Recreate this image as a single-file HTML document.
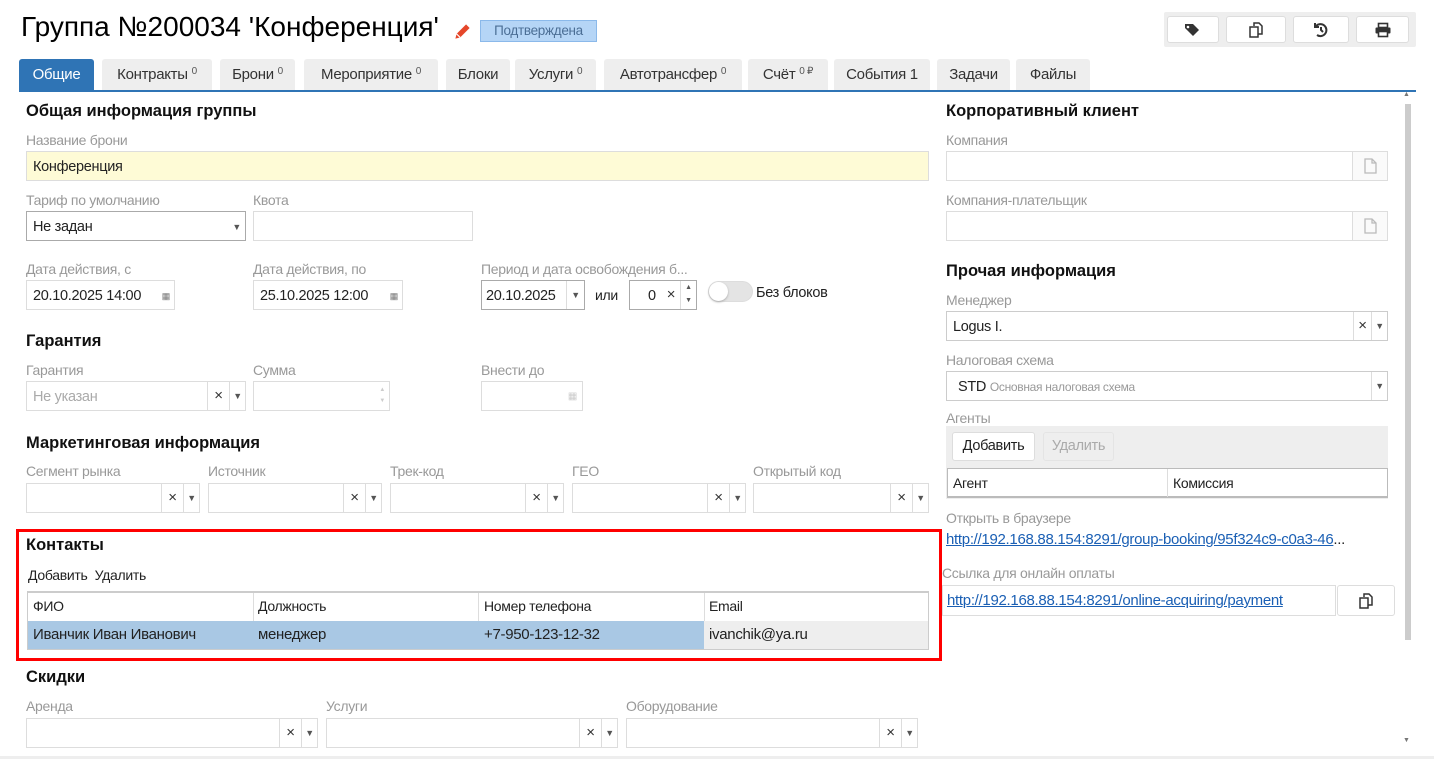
<!DOCTYPE html>
<html><head><meta charset="utf-8">
<style>
*{box-sizing:border-box;margin:0;padding:0}
body{width:1434px;height:759px;position:relative;overflow:hidden;background:#fff;font-family:"Liberation Sans",sans-serif;font-size:14px;color:#222;letter-spacing:-0.3px}
.a{position:absolute;white-space:nowrap}
.h{position:absolute;font-weight:bold;font-size:16.5px;color:#111;white-space:nowrap;letter-spacing:0}
.l{position:absolute;color:#999;font-size:14px;white-space:nowrap}
.i{position:absolute;border:1px solid #ddd;background:#fff;height:30px;line-height:30px;padding-left:6px;font-size:14.5px;white-space:nowrap;overflow:hidden}
.s{border-color:#aaa}
.x{position:absolute;top:0;height:28px;width:22px;text-align:center;font-size:15px;color:#333;border-left:1px solid #ddd;line-height:28px}
.c{position:absolute;top:0;height:28px;width:16px;text-align:center;font-size:9px;color:#555;border-left:1px solid #ddd;line-height:28px;right:0}
.tab{position:absolute;top:59px;height:31px;background:#eee;border-radius:3px 3px 0 0;line-height:31px;text-align:center;font-size:15px;color:#333}
.tab span{font-size:10px;position:relative;top:-5px;color:#555}
.tb{position:absolute;top:16px;height:27px;background:#fff;border:1px solid #ddd;border-radius:3px}
.tb svg{position:absolute;left:50%;top:50%;transform:translate(-50%,-50%)}
a{color:#1a5fb4;text-decoration:underline}
</style></head><body>
<div class="a" style="left:21px;top:11px;font-size:28px;color:#000;letter-spacing:0">Группа №200034 'Конференция'</div>
<svg class="a" style="left:453px;top:22px" width="19" height="19" viewBox="0 0 16 16"><path d="M2 14l1-4 8-8 3 3-8 8z" fill="#e5472a"/><path d="M3 10l3 3" stroke="#fff" stroke-width="1"/></svg>
<div class="a" style="left:480px;top:20px;width:117px;height:22px;background:#b5d5f6;border:1px solid #8bb9ea;color:#4b6e95;font-size:13.5px;line-height:20px;text-align:center">Подтверждена</div>

<div class="a" style="left:1164px;top:12px;width:252px;height:35px;background:#eee;border-radius:2px"></div>
<div class="tb" style="left:1167px;width:52px"><svg width="18" height="14" viewBox="0 0 18 14"><path d="M1 1h8l6 6-6 6-8-8z" fill="#333"/><circle cx="4" cy="4" r="1.3" fill="#fff"/></svg></div>
<div class="tb" style="left:1226px;width:60px"><svg width="16" height="16" viewBox="0 0 16 16" fill="none" stroke="#333" stroke-width="1.5"><path d="M6 4V1h5l3 3v8h-4"/><rect x="2" y="5" width="8" height="10"/></svg></div>
<div class="tb" style="left:1293px;width:56px"><svg width="16" height="16" viewBox="0 0 16 16" fill="none" stroke="#333" stroke-width="2"><path d="M3 4a6 6 0 1 1 1 9"/><path d="M2 1v4h4"/><path d="M8 5v3l2 2"/></svg></div>
<div class="tb" style="left:1356px;width:53px"><svg width="17" height="15" viewBox="0 0 17 15"><rect x="4" y="1" width="9" height="4" fill="none" stroke="#333" stroke-width="1.6"/><rect x="1" y="5" width="15" height="6" rx="1" fill="#333"/><rect x="4" y="9" width="9" height="5" fill="#fff" stroke="#333" stroke-width="1.6"/></svg></div>

<div class="tab" style="left:19px;width:75px;background:#2f74b5;color:#fff">Общие</div>
<div class="tab" style="left:102px;width:110px">Контракты <span>0</span></div>
<div class="tab" style="left:220px;width:75px">Брони <span>0</span></div>
<div class="tab" style="left:304px;width:134px">Мероприятие <span>0</span></div>
<div class="tab" style="left:446px;width:64px">Блоки</div>
<div class="tab" style="left:515px;width:81px">Услуги <span>0</span></div>
<div class="tab" style="left:604px;width:138px">Автотрансфер <span>0</span></div>
<div class="tab" style="left:748px;width:80px">Счёт <span>0 ₽</span></div>
<div class="tab" style="left:834px;width:96px">События 1</div>
<div class="tab" style="left:937px;width:73px">Задачи</div>
<div class="tab" style="left:1016px;width:74px">Файлы</div>
<div class="a" style="left:19px;top:90px;width:1397px;height:2px;background:#2f74b5"></div>

<div class="a" style="left:1405px;top:104px;width:6px;height:536px;background:#ccc"></div>
<div class="a" style="left:1403px;top:91px;font-size:7px;color:#777">▲</div>
<div class="a" style="left:1403px;top:737px;font-size:7px;color:#777">▼</div>
<div class="a" style="left:0;top:756px;width:1434px;height:3px;background:#eee"></div>

<div class="h" style="left:26px;top:102px">Общая информация группы</div>
<div class="l" style="left:26px;top:132px">Название брони</div>
<div class="i" style="left:26px;top:151px;width:903px;background:#fefbd6">Конференция</div>
<div class="l" style="left:26px;top:192px">Тариф по умолчанию</div>
<div class="i s" style="left:26px;top:211px;width:220px">Не задан<span class="a" style="right:4px;top:0;font-size:9px;color:#555">▼</span></div>
<div class="l" style="left:253px;top:192px">Квота</div>
<div class="i" style="left:253px;top:211px;width:220px"></div>

<div class="l" style="left:26px;top:261px">Дата действия, с</div>
<div class="i" style="left:26px;top:280px;width:149px">20.10.2025 14:00<span class="a" style="right:4px;font-size:9px;color:#777">▦</span></div>
<div class="l" style="left:253px;top:261px">Дата действия, по</div>
<div class="i" style="left:253px;top:280px;width:150px">25.10.2025 12:00<span class="a" style="right:4px;font-size:9px;color:#777">▦</span></div>
<div class="l" style="left:481px;top:261px">Период и дата освобождения б...</div>
<div class="i s" style="left:481px;top:280px;width:104px;padding-left:4px">20.10.2025<span class="c" style="width:18px">▼</span></div>
<div class="a" style="left:595px;top:287px">или</div>
<div class="i" style="left:629px;top:280px;width:68px;border-color:#aaa"><span class="a" style="left:18px">0</span><span class="x" style="left:30px;border:none">×</span><span class="c" style="font-size:7px;line-height:13px;height:28px">▲<br>▼</span></div>
<div class="a" style="left:708px;top:281px;width:45px;height:21px;border-radius:11px;background:#e4e4e4;border:1px solid #ddd"><div style="width:19px;height:19px;border-radius:50%;background:#fff;box-shadow:0 1px 2px #aaa"></div></div>
<div class="a" style="left:756px;top:285px;font-size:14.5px">Без блоков</div>

<div class="h" style="left:26px;top:332px">Гарантия</div>
<div class="l" style="left:26px;top:362px">Гарантия</div>
<div class="i" style="left:26px;top:381px;width:220px;color:#aaa">Не указан<span class="x" style="right:16px">×</span><span class="c">▼</span></div>
<div class="l" style="left:253px;top:362px">Сумма</div>
<div class="i" style="left:253px;top:381px;width:137px"><span class="a" style="right:4px;font-size:6px;color:#ccc;line-height:11px;top:3px">▲<br>▼</span></div>
<div class="l" style="left:481px;top:362px">Внести до</div>
<div class="i" style="left:481px;top:381px;width:102px"><span class="a" style="right:5px;font-size:10px;color:#ccc">▦</span></div>

<div class="h" style="left:26px;top:434px">Маркетинговая информация</div>
<div class="l" style="left:26px;top:463px">Сегмент рынка</div>
<div class="l" style="left:208px;top:463px">Источник</div>
<div class="l" style="left:390px;top:463px">Трек-код</div>
<div class="l" style="left:572px;top:463px">ГЕО</div>
<div class="l" style="left:753px;top:463px">Открытый код</div>
<div class="i" style="left:26px;top:483px;width:174px"><span class="x" style="right:16px">×</span><span class="c">▼</span></div>
<div class="i" style="left:208px;top:483px;width:174px"><span class="x" style="right:16px">×</span><span class="c">▼</span></div>
<div class="i" style="left:390px;top:483px;width:174px"><span class="x" style="right:16px">×</span><span class="c">▼</span></div>
<div class="i" style="left:572px;top:483px;width:174px"><span class="x" style="right:16px">×</span><span class="c">▼</span></div>
<div class="i" style="left:753px;top:483px;width:176px"><span class="x" style="right:16px">×</span><span class="c">▼</span></div>

<div class="a" style="left:16px;top:529px;width:926px;height:132px;border:3px solid #f00"></div>
<div class="h" style="left:26px;top:536px">Контакты</div>
<div class="a" style="left:28px;top:567px">Добавить&nbsp; Удалить</div>
<div class="a" style="left:27px;top:591px;width:902px;height:59px;border:1px solid #ccc;border-width:2px 1px 2px 1px;background:#fff"></div>
<div class="a" style="left:28px;top:621px;width:676px;height:28px;background:#a9c8e4"></div>
<div class="a" style="left:704px;top:621px;width:224px;height:28px;background:#eee"></div>
<div class="a" style="left:253px;top:593px;width:1px;height:28px;background:#ddd"></div>
<div class="a" style="left:478px;top:593px;width:1px;height:28px;background:#ddd"></div>
<div class="a" style="left:704px;top:593px;width:1px;height:28px;background:#ddd"></div>
<div class="a" style="left:33px;top:598px">ФИО</div>
<div class="a" style="left:258px;top:598px">Должность</div>
<div class="a" style="left:484px;top:598px">Номер телефона</div>
<div class="a" style="left:709px;top:598px">Email</div>
<div class="a" style="left:33px;top:626px;font-size:15px">Иванчик Иван Иванович</div>
<div class="a" style="left:258px;top:626px;font-size:15px">менеджер</div>
<div class="a" style="left:484px;top:626px;font-size:15px">+7-950-123-12-32</div>
<div class="a" style="left:709px;top:626px;font-size:15px">ivanchik@ya.ru</div>

<div class="h" style="left:26px;top:668px">Скидки</div>
<div class="l" style="left:26px;top:698px">Аренда</div>
<div class="l" style="left:326px;top:698px">Услуги</div>
<div class="l" style="left:626px;top:698px">Оборудование</div>
<div class="i" style="left:26px;top:718px;width:292px"><span class="x" style="right:16px">×</span><span class="c">▼</span></div>
<div class="i" style="left:326px;top:718px;width:292px"><span class="x" style="right:16px">×</span><span class="c">▼</span></div>
<div class="i" style="left:626px;top:718px;width:292px"><span class="x" style="right:16px">×</span><span class="c">▼</span></div>

<div class="h" style="left:946px;top:102px">Корпоративный клиент</div>
<div class="l" style="left:946px;top:132px">Компания</div>
<div class="i" style="left:946px;top:151px;width:442px"><span class="a" style="right:0;top:0;width:35px;height:28px;border-left:1px solid #ddd;background:#fafafa"><svg style="position:absolute;left:11px;top:6px" width="13" height="16" viewBox="0 0 13 16" fill="none" stroke="#bbb" stroke-width="1.3"><path d="M1 1h7l4 4v10H1z M8 1v4h4"/></svg></span></div>
<div class="l" style="left:946px;top:192px">Компания-плательщик</div>
<div class="i" style="left:946px;top:211px;width:442px"><span class="a" style="right:0;top:0;width:35px;height:28px;border-left:1px solid #ddd;background:#fafafa"><svg style="position:absolute;left:11px;top:6px" width="13" height="16" viewBox="0 0 13 16" fill="none" stroke="#bbb" stroke-width="1.3"><path d="M1 1h7l4 4v10H1z M8 1v4h4"/></svg></span></div>
<div class="h" style="left:946px;top:262px">Прочая информация</div>
<div class="l" style="left:946px;top:292px">Менеджер</div>
<div class="i" style="left:946px;top:311px;width:442px;border-color:#ccc">Logus I.<span class="x" style="right:16px;width:18px">×</span><span class="c">▼</span></div>
<div class="l" style="left:946px;top:352px">Налоговая схема</div>
<div class="i" style="left:946px;top:371px;width:442px;border-color:#ccc;padding-left:11px">STD <span style="color:#999;font-size:12px">Основная налоговая схема</span><span class="c">▼</span></div>
<div class="l" style="left:946px;top:410px">Агенты</div>
<div class="a" style="left:946px;top:426px;width:442px;height:73px;background:#eee"></div>
<div class="a" style="left:952px;top:432px;width:83px;height:29px;background:#fff;border:1px solid #ddd;border-radius:3px;text-align:center;line-height:27px;font-size:14.5px">Добавить</div>
<div class="a" style="left:1043px;top:432px;width:71px;height:29px;background:#eee;border:1px solid #e4e4e4;border-radius:3px;text-align:center;line-height:27px;font-size:14.5px;color:#aaa">Удалить</div>
<div class="a" style="left:947px;top:468px;width:441px;height:30px;background:#fff;border:1px solid #bbb;border-bottom-width:2px"></div>
<div class="a" style="left:1167px;top:469px;width:1px;height:28px;background:#ddd"></div>
<div class="a" style="left:953px;top:475px">Агент</div>
<div class="a" style="left:1173px;top:475px">Комиссия</div>
<div class="l" style="left:946px;top:510px">Открыть в браузере</div>
<div class="a" style="left:946px;top:531px;font-size:15px;width:440px;overflow:hidden"><a>http://192.168.88.154:8291/group-booking/95f324c9-c0a3-46</a>...</div>
<div class="l" style="left:942px;top:565px">Ссылка для онлайн оплаты</div>
<div class="i" style="left:942px;top:585px;width:394px;height:31px;font-size:15px;padding-left:4px"><a>http://192.168.88.154:8291/online-acquiring/payment</a></div>
<div class="a" style="left:1337px;top:585px;width:58px;height:31px;border:1px solid #ddd;border-radius:3px;background:#fff"><svg style="position:absolute;left:20px;top:7px" width="16" height="16" viewBox="0 0 16 16" fill="none" stroke="#333" stroke-width="1.5"><path d="M6 4V1h5l3 3v8h-4"/><rect x="2" y="5" width="8" height="10"/></svg></div>
</body></html>
